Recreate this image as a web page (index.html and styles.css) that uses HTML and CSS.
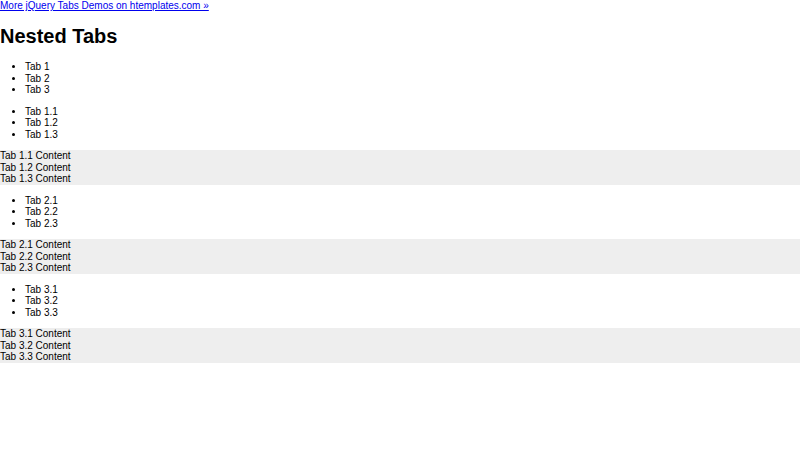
FILE: index.html
```html
<!DOCTYPE html>
<html>
<head>
<meta charset="utf-8">
<title>Nested Tabs</title>
<link rel="stylesheet" href="styles.css">
</head>
<body>
<a class="more" href="#">More jQuery Tabs Demos on htemplates.com »</a>
<h1 class="title">Nested Tabs</h1>
<div class="tabs">
  <ul class="tab-list">
    <li>Tab 1</li>
    <li>Tab 2</li>
    <li>Tab 3</li>
  </ul>
  <div class="tab-panel">
    <ul class="tab-list">
      <li>Tab 1.1</li>
      <li>Tab 1.2</li>
      <li>Tab 1.3</li>
    </ul>
    <div class="content">
      <div>Tab 1.1 Content</div>
      <div>Tab 1.2 Content</div>
      <div>Tab 1.3 Content</div>
    </div>
  </div>
  <div class="tab-panel">
    <ul class="tab-list">
      <li>Tab 2.1</li>
      <li>Tab 2.2</li>
      <li>Tab 2.3</li>
    </ul>
    <div class="content">
      <div>Tab 2.1 Content</div>
      <div>Tab 2.2 Content</div>
      <div>Tab 2.3 Content</div>
    </div>
  </div>
  <div class="tab-panel">
    <ul class="tab-list">
      <li>Tab 3.1</li>
      <li>Tab 3.2</li>
      <li>Tab 3.3</li>
    </ul>
    <div class="content">
      <div>Tab 3.1 Content</div>
      <div>Tab 3.2 Content</div>
      <div>Tab 3.3 Content</div>
    </div>
  </div>
</div>
</body>
</html>
```
FILE: styles.css
```css
html, body {
  margin: 0;
  padding: 0;
  background: #fff;
}
body {
  font-family: "Liberation Sans", Arial, sans-serif;
  font-size: 10px;
  line-height: 11.5px;
  color: #000;
}
.more {
  color: #0000ee;
  text-decoration: underline;
}
.title {
  font-size: 20px;
  line-height: 23px;
  font-weight: bold;
  margin: 13.4px 0;
}
.tab-list {
  margin: 10px 0;
  padding-left: 25px;
  list-style: disc;
}
.content {
  background: #eeeeee;
}
```
